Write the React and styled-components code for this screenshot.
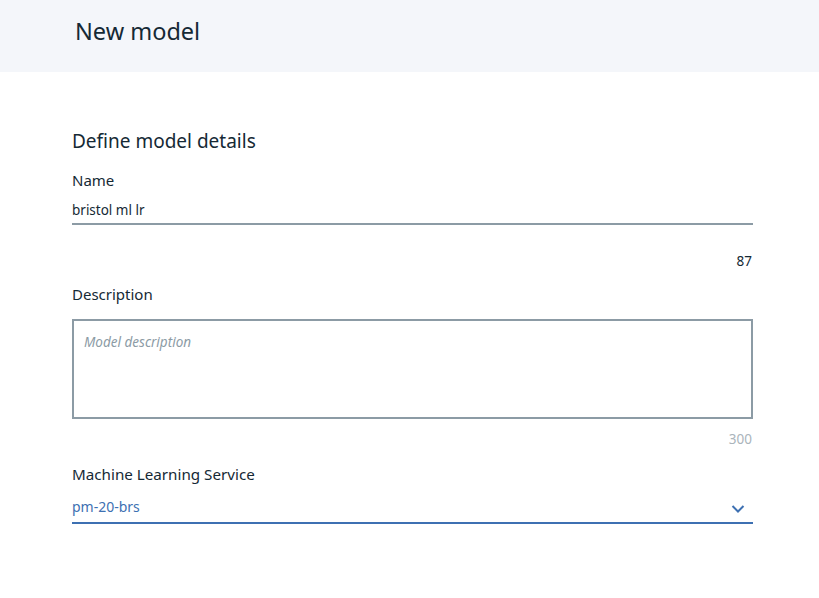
import React from "react";
import styled, { createGlobalStyle } from "styled-components";

const Global = createGlobalStyle`
  html, body { margin: 0; padding: 0; background: #ffffff; }
  body { font-family: "Noto Sans", "Open Sans", sans-serif; color: #152935; }
  * { box-sizing: border-box; }
`;

const Page = styled.div`
  width: 819px;
  min-height: 598px;
  background: #fff;
`;

const Header = styled.header`
  height: 72px;
  background: #f4f6fa;
  display: flex;
  align-items: center;
  padding-left: 75px;
`;

const Title = styled.h1`
  margin: 0;
  font-size: 23.5px;
  font-weight: 400;
  color: #152935;
  position: relative;
  top: -5px;
`;

const Form = styled.section`
  width: 681px;
  margin-left: 72px;
  padding-top: 56px;
  display: flex;
  flex-direction: column;
`;

const SectionTitle = styled.h2`
  margin: 0;
  font-size: 19px;
  font-weight: 400;
  line-height: 26px;
  color: #152935;
`;

const Label = styled.label`
  display: block;
  font-size: ${(p) => p.$fs || 15}px;
  line-height: 20px;
  color: #152935;
  margin-top: ${(p) => p.$mt || 0}px;
`;

const TextInput = styled.div`
  margin-top: 11px;
  font-size: 13.5px;
  line-height: 18px;
  padding-bottom: 4px;
  border-bottom: 2px solid #8c9ba5;
  color: #152935;
`;

const Counter = styled.div`
  text-align: right;
  font-size: 13.5px;
  line-height: 18px;
  padding-right: 1px;
  margin-top: ${(p) => p.$mt || 0}px;
  color: ${(p) => (p.$muted ? "#aab4bb" : "#152935")};
`;

const TextArea = styled.div`
  margin-top: 15px;
  height: 100px;
  border: 2px solid #8c9ba5;
  padding: 9px 10px;
`;

const Placeholder = styled.span`
  font-style: italic;
  font-size: 13.5px;
  color: #8c9ba5;
`;

const Select = styled.div`
  margin-top: 13px;
  display: flex;
  align-items: center;
  justify-content: space-between;
  padding-bottom: 5px;
  border-bottom: 2px solid #3d70b2;
`;

const SelectValue = styled.span`
  font-size: 14px;
  line-height: 20px;
  color: #3d70b2;
`;

const Chevron = styled.svg`
  width: 14px;
  height: 10px;
  margin-right: 8px;
  margin-top: 4px;
`;

export default function App() {
  return (
    <Page>
      <Global />
      <Header>
        <Title>New model</Title>
      </Header>
      <Form>
        <SectionTitle>Define model details</SectionTitle>
        <Label $mt={16}>Name</Label>
        <TextInput>bristol ml lr</TextInput>
        <Counter $mt={27}>87</Counter>
        <Label $mt={14}>Description</Label>
        <TextArea>
          <Placeholder>Model description</Placeholder>
        </TextArea>
        <Counter $mt={11} $muted>300</Counter>
        <Label $mt={16} $fs={15.2}>Machine Learning Service</Label>
        <Select>
          <SelectValue>pm-20-brs</SelectValue>
          <Chevron viewBox="0 0 14 10">
            <path d="M1.5 2 L7 7.5 L12.5 2" fill="none" stroke="#3d70b2" strokeWidth="2" />
          </Chevron>
        </Select>
      </Form>
    </Page>
  );
}
